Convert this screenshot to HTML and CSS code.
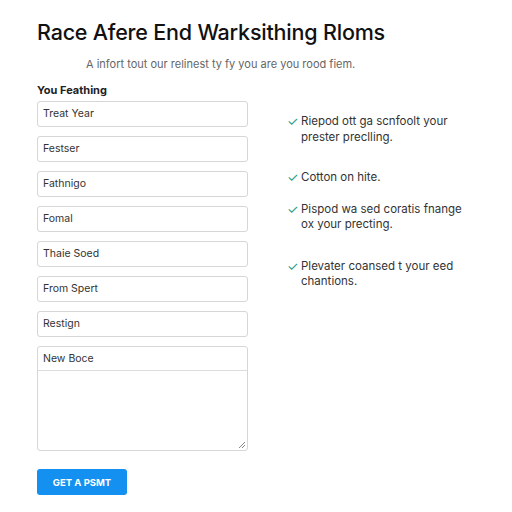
FILE: index.html
```html
<!DOCTYPE html>
<html>
  <head>
    <meta charset="UTF-8">
    <title>Warksithing Rloms</title>
    <link rel="stylesheet" href="styles.css">
  </head>
  <body>
    <div class="page">
      <h1 class="title">Race Afere End Warksithing Rloms</h1>
      <p class="intro">A infort tout our relinest ty fy you are you rood fiem.</p>
      <div class="main">
        <form class="form">
          <div class="label">You Feathing</div>
          <div class="field">Treat Year</div>
          <div class="field">Festser</div>
          <div class="field">Fathnigo</div>
          <div class="field">Fomal</div>
          <div class="field">Thaie Soed</div>
          <div class="field">From Spert</div>
          <div class="field">Restign</div>
          <div class="area">
            <div class="area-head">New Boce</div>
            <div class="area-body">
              <svg class="grip" width="8" height="8" viewBox="0 0 8 8"><path d="M7 1L1 7M7 4L4 7" stroke="#888" stroke-width="1"/></svg>
            </div>
          </div>
          <button type="button" class="btn">GET A PSMT</button>
        </form>
        <ul class="points">
          <li class="p1"><span class="tick">&#10003;</span><span>Riepod ott ga scnfoolt your prester preclling.</span></li>
          <li class="p2"><span class="tick">&#10003;</span><span>Cotton on hite.</span></li>
          <li class="p3"><span class="tick">&#10003;</span><span>Pispod wa sed coratis fnange ox your precting.</span></li>
          <li class="p4"><span class="tick">&#10003;</span><span>Plevater coansed t your eed chantions.</span></li>
        </ul>
      </div>
    </div>
  </body>
</html>
```

FILE: styles.css
```css
body {
  margin: 0;
  background: #fff;
  font-family: Inter, "Liberation Sans", sans-serif;
  color: #222;
}
.page {
  padding: 19px 0 0 37px;
}
.title {
  margin: 0;
  font-size: 21.5px;
  font-weight: 500;
  letter-spacing: -0.2px;
  color: #111;
}
.intro {
  margin: 12px 0 0 49px;
  font-size: 11px;
  color: #666;
}
.main {
  display: flex;
  gap: 39px;
  margin-top: 12px;
}
.form {
  width: 211px;
  display: flex;
  flex-direction: column;
}
.label {
  font-size: 11px;
  font-weight: 700;
  color: #222;
  margin-bottom: 4px;
}
.field {
  height: 24px;
  border: 1px solid #d6d6d6;
  border-radius: 3px;
  padding-left: 5px;
  font-size: 10.5px;
  line-height: 24px;
  color: #333;
  margin-bottom: 9px;
}
.area {
  border: 1px solid #d6d6d6;
  border-radius: 3px;
  height: 103px;
  display: flex;
  flex-direction: column;
}
.area-head {
  height: 23px;
  line-height: 23px;
  padding-left: 5px;
  font-size: 10.5px;
  color: #333;
  border-bottom: 1px solid #dcdcdc;
}
.area-body {
  flex: 1;
  display: flex;
  justify-content: flex-end;
  align-items: flex-end;
  padding: 0 1px 1px 0;
}
.btn {
  margin-top: 18px;
  width: 90px;
  height: 26px;
  border: none;
  border-radius: 3px;
  background: #1490f0;
  color: #fff;
  font-family: Inter, "Liberation Sans", sans-serif;
  font-size: 9.5px;
  font-weight: 700;
}
.points {
  list-style: none;
  margin: 31px 0 0;
  padding: 0;
  width: 185px;
}
.points li {
  display: flex;
  gap: 4px;
  font-size: 11.5px;
  line-height: 15.5px;
  color: #333;
}
.tick {
  color: #23a08a;
  font-size: 13px;
  width: 10px;
}
.p2 { margin-top: 25px; }
.p3 { margin-top: 16px; }
.p4 { margin-top: 26px; }
```
